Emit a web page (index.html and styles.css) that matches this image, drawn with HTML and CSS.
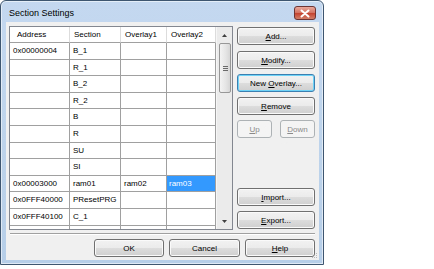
FILE: index.html
```html
<!DOCTYPE html>
<html>
<head>
	<meta charset="utf-8">
	<title>Section Settings</title>
	<link rel="stylesheet" href="styles.css">
</head>
<body>
	<div class="window">
		<div class="titlebar">
			<span class="title">Section Settings</span>
			<span class="close">
				<svg width="10" height="9" viewBox="0 0 10 9"><path d="M1.5 1.5 L8.5 7.5 M8.5 1.5 L1.5 7.5" stroke="#fff" stroke-width="2" stroke-linecap="round"/></svg>
			</span>
		</div>
		<div class="client">
			<div class="main">
				<div class="list">
					<div class="grid">
						<div class="hd first">Address</div><div class="hd">Section</div><div class="hd">Overlay1</div><div class="hd">Overlay2</div>
						<div class="cell">0x00000004</div><div class="cell">B_1</div><div class="cell"></div><div class="cell"></div>
						<div class="cell"></div><div class="cell">R_1</div><div class="cell"></div><div class="cell"></div>
						<div class="cell"></div><div class="cell">B_2</div><div class="cell"></div><div class="cell"></div>
						<div class="cell"></div><div class="cell">R_2</div><div class="cell"></div><div class="cell"></div>
						<div class="cell"></div><div class="cell">B</div><div class="cell"></div><div class="cell"></div>
						<div class="cell"></div><div class="cell">R</div><div class="cell"></div><div class="cell"></div>
						<div class="cell"></div><div class="cell">SU</div><div class="cell"></div><div class="cell"></div>
						<div class="cell"></div><div class="cell">SI</div><div class="cell"></div><div class="cell"></div>
						<div class="cell">0x00003000</div><div class="cell">ram01</div><div class="cell">ram02</div><div class="cell sel">ram03</div>
						<div class="cell">0x0FFF40000</div><div class="cell">PResetPRG</div><div class="cell"></div><div class="cell"></div>
						<div class="cell">0x0FFF40100</div><div class="cell">C_1</div><div class="cell"></div><div class="cell"></div>
						<div class="cell"></div><div class="cell"></div><div class="cell"></div><div class="cell"></div>
					</div>
					<div class="vscroll">
						<div class="arrow"><svg width="5" height="3" viewBox="0 0 5 3"><path d="M0 3 L2.5 0 L5 3 Z" fill="#404040"/></svg></div>
						<div class="track">
							<div class="thumb"><span></span><span></span><span></span></div>
						</div>
						<div class="arrow"><svg width="5" height="3" viewBox="0 0 5 3"><path d="M0 0 L5 0 L2.5 3 Z" fill="#404040"/></svg></div>
					</div>
				</div>
				<div class="side">
					<button class="btn"><u>A</u>dd...</button>
					<button class="btn mod"><u>M</u>odify...</button>
					<button class="btn default">New <u>O</u>verlay...</button>
					<button class="btn"><u>R</u>emove</button>
					<div class="updown">
						<button class="btn off"><u>U</u>p</button>
						<button class="btn off"><u>D</u>own</button>
					</div>
					<button class="btn push"><u>I</u>mport...</button>
					<button class="btn"><u>E</u>xport...</button>
				</div>
			</div>
			<div class="sep"></div>
			<div class="footer">
				<button class="btn ok">OK</button>
				<button class="btn cancel">Cancel</button>
				<button class="btn ok"><u>H</u>elp</button>
			</div>
			<svg class="grip" width="7" height="7" viewBox="0 0 7 7">
				<rect x="5" y="1" width="1" height="1" fill="#b8b8b8"/>
				<rect x="3" y="3" width="1" height="1" fill="#b8b8b8"/><rect x="5" y="3" width="1" height="1" fill="#b8b8b8"/>
				<rect x="1" y="5" width="1" height="1" fill="#b8b8b8"/><rect x="3" y="5" width="1" height="1" fill="#b8b8b8"/><rect x="5" y="5" width="1" height="1" fill="#b8b8b8"/>
			</svg>
		</div>
	</div>
</body>
</html>
```

FILE: styles.css
```css
body{margin: 0;background: #ffffff;font-family: "Liberation Sans", Arial, sans-serif;font-size: 8px;color: #000000;}
.window{width: 324px;height: 265px;box-sizing: border-box;border: 1px solid #3e5670;border-radius: 6px 6px 0 0;background: linear-gradient(#c4d9f0, #b7cee8);box-shadow: inset 0 0 0 1px rgba(255,255,255,0.55);display: flex;flex-direction: column;}
.titlebar{height: 21px;display: flex;justify-content: space-between;align-items: flex-start;padding: 0 7px 0 8px;}
.title{font-size: 9px;line-height: 24px;}
.close{margin-top: 5px;width: 22px;height: 14px;box-sizing: border-box;border: 1px solid #6d3533;border-radius: 3px;background: linear-gradient(#e9a99c, #d27160 50%, #c4412e 50%, #d2806a);display: flex;align-items: center;justify-content: center;}
.client{position: relative;margin: 0 4px 0 5px;height: 238px;background: #f0f0f0;padding: 4px 4px 3px 3px;box-sizing: border-box;display: flex;flex-direction: column;}
.main{height: 204px;display: flex;gap: 4px;}
.list{width: 224px;box-sizing: border-box;border: 1px solid #828790;background: #ffffff;display: flex;overflow: hidden;}
.grid{width: 206px;display: grid;grid-template-columns: 60px 51px 46px 49px;grid-template-rows: 16px repeat(12, 16.6px);align-content: start;}
.hd{border-right: 1px solid #dcdcdc;border-bottom: 1px solid #a0a0a0;padding-left: 4px;line-height: 15px;white-space: nowrap;}
.hd.first{padding-left: 7px;}
.cell{border-right: 1px solid #a0a0a0;border-bottom: 1px solid #a0a0a0;padding-left: 3px;line-height: 15.6px;white-space: nowrap;overflow: hidden;}
.cell.sel{background: #3399ff;color: #ffffff;padding-left: 2px;}
.vscroll{width: 16px;background: #ebebeb;border-left: 1px solid #f6f6f6;box-sizing: border-box;display: flex;flex-direction: column;}
.arrow{height: 16px;display: flex;align-items: center;justify-content: center;}
.track{flex: 1;}
.thumb{margin: 0 1px 0 2px;height: 50px;box-sizing: border-box;border: 1px solid #979797;border-radius: 2px;background: linear-gradient(to right, #f3f3f3, #e4e4e4 60%, #d6d6d6);display: flex;flex-direction: column;align-items: center;justify-content: center;gap: 1px;}
.thumb span{width: 5px;height: 1px;background: #6a6a6a;}
.side{width: 78px;display: flex;flex-direction: column;gap: 5px;padding: 1px 0 1px;box-sizing: border-box;}
.btn{height: 18px;box-sizing: border-box;border: 1px solid #707070;border-radius: 3px;background: linear-gradient(#f2f2f2, #ebebeb 50%, #dddddd 50%, #cfcfcf);box-shadow: inset 0 0 0 1px #fafafa;font-family: inherit;font-size: 8px;color: #000000;padding: 0;}
.btn.mod{margin-top: 1px;}
.btn.default{border-color: #3c7fb1;box-shadow: inset 0 0 0 1px #6ed3f7;}
.updown{display: flex;justify-content: space-between;}
.updown .btn{width: 35px;}
.btn.off{border-color: #adb2b5;background: #f4f4f4;box-shadow: none;color: #8a8a8a;}
.btn.push{margin-top: auto;}
.sep{margin: 3px 0 0 1px;height: 1px;border-top: 1px solid #a0a0a0;border-bottom: 1px solid #ffffff;}
.footer{margin-top: 4px;display: flex;justify-content: flex-end;gap: 5px;}
.footer .btn{width: 70px;}
.footer .cancel{width: 71px;}
.grip{position: absolute;right: 1px;bottom: 1px;}
```
